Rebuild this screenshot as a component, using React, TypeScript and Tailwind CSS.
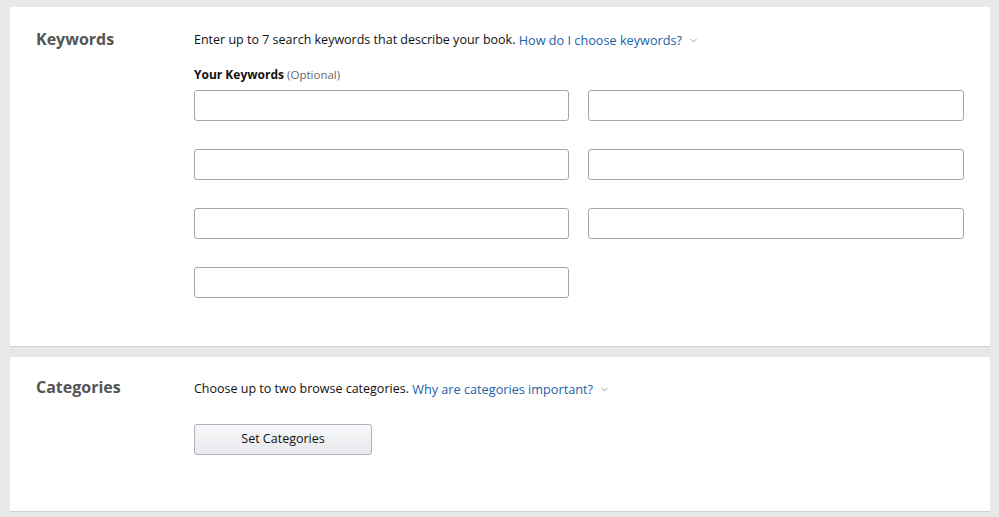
import { ChevronDown } from 'lucide-react';

const font = { fontFamily: '"Open Sans", "Noto Sans", Arial, sans-serif' };

function HelpLink({ children }: { children: React.ReactNode }) {
  return (
    <a className="text-[#1a62aa] text-[12.7px] leading-[16px] align-top inline-flex items-center gap-[6px] cursor-pointer">
      {children}
      <ChevronDown size={11} strokeWidth={1.5} className="text-[#767676] mt-[1px]" />
    </a>
  );
}

export default function App() {
  const fields = Array.from({ length: 7 });

  return (
    <div className="min-h-screen bg-[#e8e8e8] pt-[7px] pl-[10px] pr-[9px]" style={font}>
      {/* Keywords */}
      <section className="bg-white border-b border-[#cfcfcf] px-[26px] pt-[26px] pb-[48px] flex">
        <h2 className="w-[158px] shrink-0 text-[16px] font-bold text-[#555] leading-[20px] mt-[-4px]">Keywords</h2>
        <div className="flex-1 pr-[26px]">
          <p className="h-[16px] text-[12.5px] text-[#111] leading-[16px] mt-[-1px]">
            Enter up to 7 search keywords that describe your book.{' '}
            <HelpLink>How do I choose keywords?</HelpLink>
          </p>
          <p className="text-[12px] text-[#111] mt-[19px] leading-[16px]">
            <span className="font-bold">Your Keywords</span>{' '}
            <span className="text-[#666] text-[11.5px]">(Optional)</span>
          </p>
          <div className="grid grid-cols-[375px_376px] gap-x-[19px] gap-y-[28px] mt-[7px]">
            {fields.map((_, i) => (
              <input
                key={i}
                type="text"
                className="h-[31px] w-full border border-[#a6a6a6] rounded-[3px] px-2 text-[13px] outline-none"
              />
            ))}
          </div>
        </div>
      </section>

      {/* Categories */}
      <section className="bg-white border-b border-[#cfcfcf] mt-[10px] px-[26px] pt-[21px] pb-[56px] flex">
        <h2 className="w-[158px] shrink-0 text-[16px] font-bold text-[#555] leading-[20px] mt-[-1px]">Categories</h2>
        <div className="flex-1">
          <p className="h-[16px] text-[12.5px] text-[#111] leading-[16px] mt-[3px]">
            Choose up to two browse categories.{' '}
            <HelpLink>Why are categories important?</HelpLink>
          </p>
          <button className="mt-[27px] w-[178px] h-[31px] border border-[#adb1b8] rounded-[3px] bg-gradient-to-b from-[#f7f8fa] to-[#e7e9ec] text-[12.5px] text-[#111]">
            Set Categories
          </button>
        </div>
      </section>
    </div>
  );
}
